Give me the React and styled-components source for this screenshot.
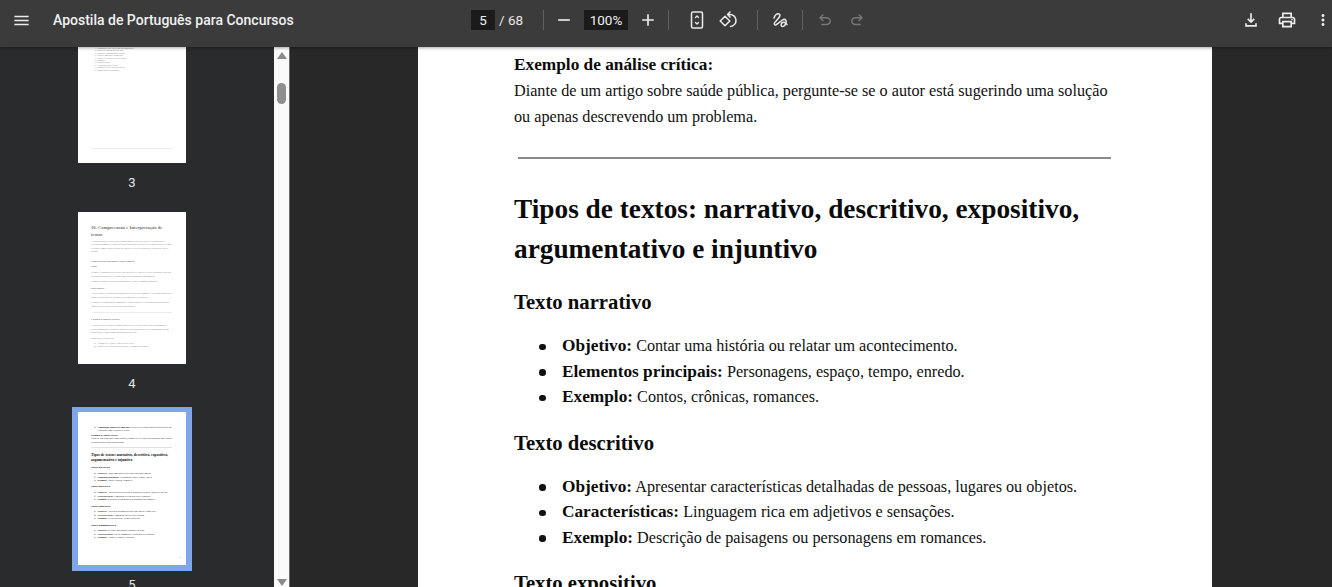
import React from 'react'
import styled, { createGlobalStyle } from 'styled-components'

const GlobalStyle = createGlobalStyle`
  html, body { margin: 0; height: 100%; overflow: hidden; background: #282828; }
  #root { height: 100%; }
`

const Shell = styled.div`
  height: 587px;
  display: flex;
  flex-direction: column;
  overflow: hidden;
  font-family: Roboto, "Liberation Sans", sans-serif;
`

const Toolbar = styled.header`
  height: 47px;
  flex: none;
  display: grid;
  grid-template-columns: 471px auto 1fr;
  align-items: center;
  padding-bottom: 7px;
  box-sizing: border-box;
  background: #3b3b3b;
  color: #f1f1f1;
  position: relative;
  z-index: 2;
  box-shadow: 0 1px 3px rgba(0, 0, 0, 0.35);
`

const ToolbarLeft = styled.div`
  display: flex;
  align-items: center;
  padding-left: 9px;
`

const Title = styled.div`
  margin-left: 20px;
  font-size: 14px;
  font-weight: 500;
  color: #f1f1f1;
`

const ToolbarCenter = styled.div`
  display: flex;
  align-items: center;
  height: 24px;
`

const ToolbarRight = styled.div`
  display: flex;
  justify-content: flex-end;
  align-items: center;
  gap: 12px;
`

const IconButton = styled.button`
  width: ${p => p.$w || 24}px;
  height: 24px;
  padding: 0;
  border: 0;
  background: none;
  color: ${p => (p.$dim ? '#777' : '#ececec')};
  display: flex;
  align-items: center;
  justify-content: center;
  margin-left: ${p => p.$ml || 0}px;
`

const Sep = styled.div`
  width: 1px;
  height: 20px;
  background: #5f5f5f;
  margin-left: ${p => p.$ml || 0}px;
`

const Field = styled.div`
  height: 20px;
  background: #1b1b1b;
  color: #f1f1f1;
  font-size: 13.5px;
  display: flex;
  align-items: center;
  justify-content: center;
  width: ${p => p.$w}px;
  margin-left: ${p => p.$ml || 0}px;
`

const PageTotal = styled.span`
  font-size: 13.5px;
  width: 23px;
  white-space: nowrap;
  margin-left: 4px;
  color: #e8e8e8;
`

const Body = styled.div`
  flex: 1;
  min-height: 0;
  display: flex;
`

const Sidebar = styled.aside`
  width: 274px;
  flex: none;
  background: #2a2b2d;
  overflow: hidden;
`

const ThumbList = styled.div`
  display: flex;
  flex-direction: column;
  align-items: center;
  width: 264px;
`

const ThumbItem = styled.div`
  display: flex;
  flex-direction: column;
  align-items: center;
  margin-bottom: ${p => p.$mb}px;
`

const ThumbFrame = styled.div`
  padding: 5px 6px 6px;
  background: #7ea6e8;
  margin-top: -5px;
`

const ThumbCrop = styled.div`
  width: 108px;
  height: ${p => p.$h}px;
  background: #fff;
  overflow: hidden;
`

const ThumbScale = styled.div`
  width: 794px;
  height: 1118px;
  transform: scale(0.136);
  transform-origin: 0 0;
  opacity: ${p => (p.$faded ? 0.6 : 1)};
`

const ThumbLabel = styled.div`
  margin-top: ${p => p.$mt}px;
  font-size: 13px;
  line-height: 16px;
  color: #e6e6e6;
`

const ScrollTrack = styled.div`
  width: 16px;
  flex: none;
  background: #fafafa;
  display: flex;
  flex-direction: column;
  align-items: center;
  justify-content: space-between;
  position: relative;
  border-right: 1px solid #6b6b6b;
  box-sizing: border-box;
`

const ScrollThumb = styled.div`
  position: absolute;
  top: 36px;
  left: 3px;
  width: 9px;
  height: 21px;
  border-radius: 5px;
  background: #8f8f8f;
`

const Arrow = styled.div`
  width: 0;
  height: 0;
  border-left: 5px solid transparent;
  border-right: 5px solid transparent;
  ${p => (p.$down ? 'border-top: 7px solid #8a8a8a; margin-bottom: 1px;' : 'border-bottom: 7px solid #8a8a8a; margin-top: 5px;')}
`

const Viewer = styled.main`
  flex: 1;
  min-width: 0;
  background: #282828;
  padding-left: 128px;
  overflow: hidden;
`

const Sheet = styled.div`
  width: 794px;
  height: ${p => (p.$main ? 540 : 1118)}px;
  overflow: hidden;
  box-sizing: border-box;
  background: #fff;
  padding: 0 96px;
  color: #111;
  font-family: "Liberation Serif", Georgia, serif;
  font-size: 16.2px;
  line-height: 26px;
  position: relative;
  b { font-size: 17.3px; line-height: 1; color: #0b0b0b; }
`

const Para = styled.p`
  margin: 0;
  padding-top: ${p => p.$pt || 0}px;
`

const Rule = styled.hr`
  border: 0;
  height: 2px;
  background: #8a8a8a;
  margin: ${p => p.$mt}px 5px 0 4px;
`

const H1 = styled.h1`
  margin: 0;
  padding-top: 90px;
  font-size: 34px;
  line-height: 50px;
  font-weight: 700;
  color: #0b0b0b;
`

const H2 = styled.h2`
  margin: 0;
  padding-top: ${p => p.$pt}px;
  font-size: 27.3px;
  line-height: 40px;
  font-weight: 700;
  color: #0b0b0b;
`

const H3 = styled.h3`
  margin: 0;
  padding-top: ${p => p.$pt}px;
  font-size: 20.7px;
  line-height: 26px;
  font-weight: 700;
  color: #0b0b0b;
`

const List = styled.ul`
  margin: 0;
  padding: ${p => p.$pt ?? 19}px 0 0 48px;
  list-style: none;
`

const Item = styled.li`
  line-height: 25.5px;
  position: relative;
  &::before {
    content: '';
    position: absolute;
    left: -23px;
    top: 9.5px;
    width: 6.5px;
    height: 6.5px;
    border-radius: 50%;
    background: #111;
  }
`

const TocList = styled.ol`
  margin: 0;
  padding: 0 0 0 44px;
  font-size: 14px;
  line-height: 18px;
`

const PageNo = styled.div`
  position: absolute;
  right: 40px;
  bottom: 34px;
  font-size: 14px;
  color: #333;
`

const Icon = ({ size = 20, children, ...rest }) => (
  <svg width={size} height={size} viewBox="0 0 24 24" fill="currentColor" {...rest}>{children}</svg>
)

const Stroke = ({ size = 20, children }) => (
  <svg width={size} height={size} viewBox="0 0 20 20" fill="none" stroke="currentColor" strokeWidth="1.5" strokeLinecap="round" strokeLinejoin="round">{children}</svg>
)

const undoPath = 'M7 19v-2h7.1q1.575 0 2.738-1T18 13.5q0-1.5-1.162-2.5T14.1 10H7.8l2.6 2.6L9 14 4 9l5-5 1.4 1.4L7.8 8h6.3q2.425 0 4.163 1.575T20 13.5q0 2.35-1.738 3.925T14.1 19z'

const sections = [
  ['Texto narrativo', [
    ['Objetivo:', 'Contar uma história ou relatar um acontecimento.'],
    ['Elementos principais:', 'Personagens, espaço, tempo, enredo.'],
    ['Exemplo:', 'Contos, crônicas, romances.'],
  ]],
  ['Texto descritivo', [
    ['Objetivo:', 'Apresentar características detalhadas de pessoas, lugares ou objetos.'],
    ['Características:', 'Linguagem rica em adjetivos e sensações.'],
    ['Exemplo:', 'Descrição de paisagens ou personagens em romances.'],
  ]],
  ['Texto expositivo', [
    ['Objetivo:', 'Apresentar informações sobre um tema de forma clara.'],
    ['Características:', 'Linguagem objetiva, uso de dados.'],
    ['Exemplo:', 'Textos didáticos e artigos científicos.'],
  ]],
  ['Texto argumentativo', [
    ['Objetivo:', 'Defender uma opinião com base em fatos.'],
    ['Características:', 'Uso de argumentos e estratégias de persuasão.'],
    ['Exemplo:', 'Artigos de opinião e editoriais.'],
  ]],
]

const toc = ['Linguagem verbal e não verbal na comunicação', 'Funções da linguagem e seus usos', 'Figuras de linguagem mais cobradas', 'Variação linguística e norma culta', 'Coesão e coerência textual nas provas', 'Semântica', 'Ortografia oficial', 'Acentuação gráfica e hífen', 'Pontuação e crase em textos oficiais', 'Compreensão e interpretação']

// main view starts at the part of the page that is scrolled into sight
const PageFive = ({ main }) => {
  const visible = main ? sections.slice(0, 3) : sections
  return (
    <Sheet $main={main}>
      {!main && (
        <List $pt={100}>
          <Item><b>Linguagem conotativa/figurada:</b> percebe-se o sentido figurado das palavras em expressões como "coração de pedra".</Item>
        </List>
      )}
      <Para $pt={main ? 5 : 6}><b>Exemplo de análise crítica:</b></Para>
      <Para>Diante de um artigo sobre saúde pública, pergunte-se se o autor está sugerindo uma solução ou apenas descrevendo um problema.</Para>
      <Rule $mt={27} />
      <H2 $pt={30}>Tipos de textos: narrativo, descritivo, expositivo, argumentativo e injuntivo</H2>
      {visible.map(([title, items], i) => (
        <div key={title}>
          <H3 $pt={i === 0 ? 20 : 19}>{title}</H3>
          {(!main || i < 2) && (
            <List>
              {items.map(([k, v]) => <Item key={k}><b>{k}</b> {v}</Item>)}
            </List>
          )}
        </div>
      ))}
      {!main && <PageNo>5</PageNo>}
    </Sheet>
  )
}

const PageFour = () => (
  <Sheet>
    <H1>10. Compreensão e Interpretação de<br />textos</H1>
    <Para $pt={10}>A interpretação de textos exige a compreensão do que está escrito e a capacidade de relacionar informações, identificar ideias principais e perceber a intenção do autor ao longo da leitura, sempre atento ao contexto em que o texto foi produzido e ao público a que se destina.</Para>
    <H3 $pt={40}>Identificação do tema e ideia central</H3>
    <Para $pt={18}><b>Tema:</b></Para>
    <Para $pt={18}>O tema é o assunto geral do texto. Para identificá-lo, observe o título, as palavras repetidas, os primeiros parágrafos e a forma como o autor organiza as informações.</Para>
    <Para $pt={14}>Exemplo: Em um texto sobre desmatamento, o tema é o impacto ambiental.</Para>
    <Para $pt={26}><b>Ideia central:</b></Para>
    <Para $pt={11}>A ideia central é a principal mensagem que o autor quer transmitir. Ela costuma aparecer de forma clara no início ou no fim do texto, mas pode estar diluída.</Para>
    <Para $pt={14}>Exemplo: O desmatamento compromete a biodiversidade e exige políticas públicas mais rígidas e eficazes para a preservação das florestas.</Para>
    <Rule $mt={33} />
    <H3 $pt={37}>Leitura e análise crítica</H3>
    <Para $pt={18}>A leitura crítica vai além da compreensão literal. Ela exige questionar as informações, avaliar argumentos e reconhecer pontos de vista presentes no texto, comparando-os com outras fontes e com o conhecimento prévio do leitor.</Para>
    <Para $pt={17}>Passos para leitura crítica:</Para>
    <List $pt={11}>
      <Item>Pergunte-se: "Qual é o objetivo do texto?"</Item>
      <Item>Observe se o autor apresenta dados, exemplos ou opiniões.</Item>
    </List>
  </Sheet>
)

const PageThree = () => (
  <Sheet>
    <TocList start={3}>
      {toc.map(t => <li key={t}>{t}</li>)}
    </TocList>
    <Rule $mt={563} />
  </Sheet>
)

export default function App() {
  return (
    <Shell>
      <GlobalStyle />
      <Toolbar>
        <ToolbarLeft>
          <IconButton><Icon size={19}><path d="M3 18h18v-2H3v2zm0-5h18v-2H3v2zm0-7v2h18V6H3z" /></Icon></IconButton>
          <Title>Apostila de Português para Concursos</Title>
        </ToolbarLeft>
        <ToolbarCenter>
          <Field $w={24}>5</Field>
          <PageTotal>/ 68</PageTotal>
          <Sep $ml={21} />
          <IconButton $ml={8}><Icon><path d="M5 11h14v2H5z" /></Icon></IconButton>
          <Field $w={44} $ml={8}>100%</Field>
          <IconButton $ml={8}><Icon><path d="M19 13h-6v6h-2v-6H5v-2h6V5h2v6h6v2z" /></Icon></IconButton>
          <Sep $ml={8} />
          <IconButton $ml={16}>
            <Stroke>
              <rect x="4.5" y="2" width="11" height="16" rx="1.5" />
              <path d="M8.5 7.5 10 6l1.5 1.5M8.5 12.5 10 14l1.5-1.5" strokeWidth="1.2" />
            </Stroke>
          </IconButton>
          <IconButton $ml={8}>
            <Stroke>
              <path d="M6 6.2 10.8 11 6 15.8 1.2 11z" />
              <path d="M8.5 4.5h2a6 6 0 0 1 1 12M11 2 8.5 4.5 11 7" />
            </Stroke>
          </IconButton>
          <Sep $ml={16} />
          <IconButton $ml={10}>
            <Stroke>
              <path d="M4 8C5 5 7 3 9 4c1.5.8 1 2.2 0 3.4L4.8 12.6c-1.3 1.6 0 3 1.6 2L12.5 10c1.7-1.2 3.7-.6 3.7 1.6 0 2.6-1.8 4.9-3.6 4.9-1.6 0-2-2-.8-3.4 1.6-1.6 4-.7 5.2 1.4" />
            </Stroke>
          </IconButton>
          <Sep $ml={10} />
          <IconButton $ml={10} $dim><Icon size={18}><path d={undoPath} /></Icon></IconButton>
          <IconButton $ml={8} $dim><Icon size={18} style={{ transform: 'scaleX(-1)' }}><path d={undoPath} /></Icon></IconButton>
        </ToolbarCenter>
        <ToolbarRight>
          <IconButton><Icon><path d="M12 16l-4.6-4.6 1.4-1.4L11 12.2V4h2v8.2l2.2-2.2 1.4 1.4zM5 20v-4h2v2h10v-2h2v4z" /></Icon></IconButton>
          <IconButton><Icon><path d="M19 8h-1V3H6v5H5c-1.66 0-3 1.34-3 3v6h4v4h12v-4h4v-6c0-1.66-1.34-3-3-3zM8 5h8v3H8V5zm8 12v2H8v-4h8v2zm2-2v-2H6v2H4v-4c0-.55.45-1 1-1h14c.55 0 1 .45 1 1v4h-2z" /><circle cx="18" cy="11.5" r="1" /></Icon></IconButton>
          <IconButton $w={18} $ml={3}><Icon><path d="M12 8c1.1 0 2-.9 2-2s-.9-2-2-2-2 .9-2 2 .9 2 2 2zm0 2c-1.1 0-2 .9-2 2s.9 2 2 2 2-.9 2-2-.9-2-2-2zm0 6c-1.1 0-2 .9-2 2s.9 2 2 2 2-.9 2-2-.9-2-2-2z" /></Icon></IconButton>
        </ToolbarRight>
      </Toolbar>
      <Body>
        <Sidebar>
          <ThumbList>
            <ThumbItem $mb={21}>
              <ThumbCrop $h={116}><ThumbScale $faded><PageThree /></ThumbScale></ThumbCrop>
              <ThumbLabel $mt={12}>3</ThumbLabel>
            </ThumbItem>
            <ThumbItem $mb={20}>
              <ThumbCrop $h={152}><ThumbScale $faded><PageFour /></ThumbScale></ThumbCrop>
              <ThumbLabel $mt={12}>4</ThumbLabel>
            </ThumbItem>
            <ThumbItem $mb={0}>
              <ThumbFrame>
                <ThumbCrop $h={153}><ThumbScale><PageFive /></ThumbScale></ThumbCrop>
              </ThumbFrame>
              <ThumbLabel $mt={6}>5</ThumbLabel>
            </ThumbItem>
          </ThumbList>
        </Sidebar>
        <ScrollTrack>
          <Arrow />
          <ScrollThumb />
          <Arrow $down />
        </ScrollTrack>
        <Viewer>
          <PageFive main />
        </Viewer>
      </Body>
    </Shell>
  )
}
